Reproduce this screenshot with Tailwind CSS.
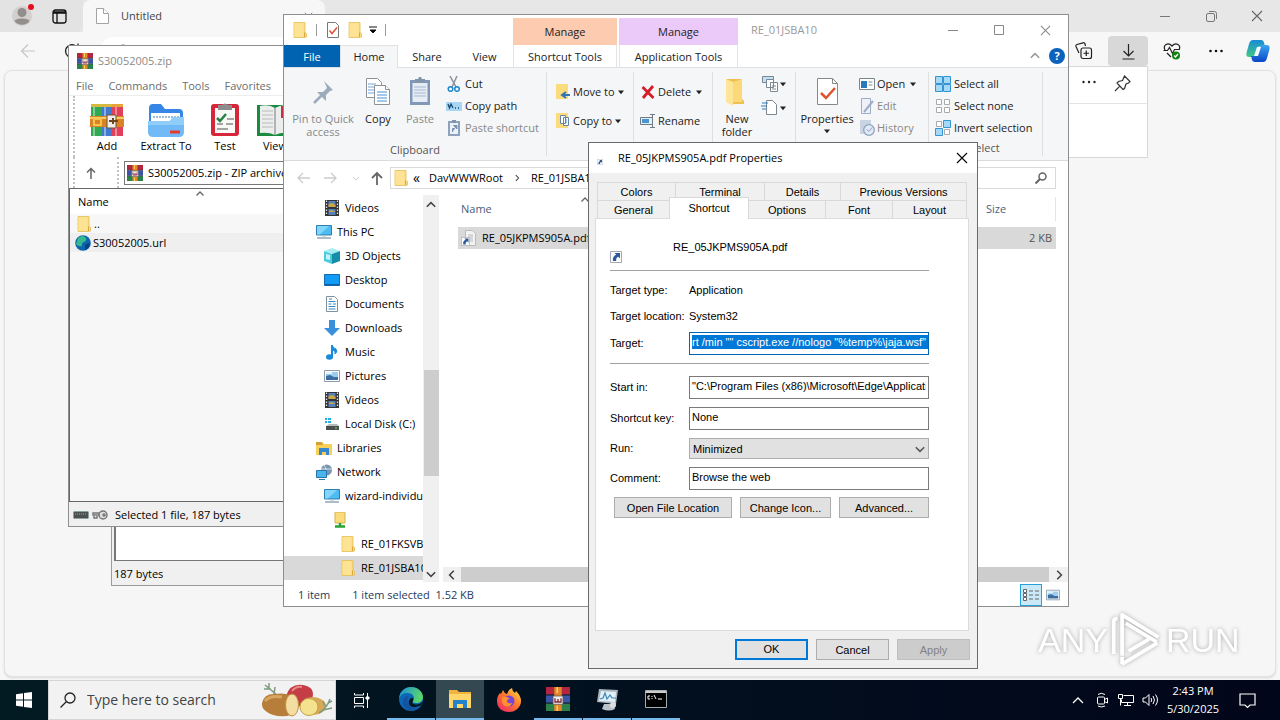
<!DOCTYPE html>
<html lang="en">

<head>
    <meta charset="utf-8" />
    <meta name="viewport" content="width=device-width, initial-scale=1.0" />
    <title>RE_01JSBA10</title>
    <script src="https://cdn.jsdelivr.net/npm/@tailwindcss/browser@4"></script>
</head>

<body class="h-screen overflow-hidden flex flex-col bg-[#e7e7e7] text-[11px] leading-4 text-black font-['Open_Sans',sans-serif]">
    <!-- Shared icons -->
    <svg class="hidden" xmlns="http://www.w3.org/2000/svg">
        <symbol id="folder" viewBox="0 0 16 16"><path d="M2 .5h11v10l1.500 1V15l-1 .5H2z" fill="#fbdc7c" stroke="#e6bd55" stroke-width=".8" /><path d="M2.500 1h9v14h-9z" fill="#ffe394" /><path d="M12.500 10.500v4.500" stroke="#dba93b" /></symbol>
        <symbol id="rar" viewBox="0 0 16 16"><path fill="#b3263f" d="M0 0h16v5H0z" /><path fill="#3a55a8" d="M0 5.500h16v5H0z" /><path fill="#2b8149" d="M0 11h16v5H0z" /><path stroke="#222c48" stroke-width=".7" d="M0 5.300h16M0 10.700h16" /><path fill="#e1862a" d="M5.500 0h5v16h-5z" /><path fill="#eee" stroke="#555" stroke-width=".5" d="M4.700 6h6.600v5.500H4.700z" /><path fill="none" stroke="#8a2533" stroke-width=".9" d="M6 7.500v2.500h4V7.500M8 8V10" /><path stroke="#ffd25c" d="M7.500 0v4M7.500 12.500V16" /></symbol>
        <symbol id="video" viewBox="0 0 16 16"><path fill="#323436" d="M1 0h14v16H1z" /><path stroke="#ddd" stroke-dasharray="1.500 1.500" stroke-width="1.300" d="M2.500 .5v15M13.500 .5v15" /><path fill="#5480bd" d="M4.500 1h7v6h-7zM4.500 9h7v6h-7z" /><path fill="#cda747" d="M4.500 4l4-1 3 2v2h-7zM5 11l3-1 3.500 2H5z" /></symbol>
        <symbol id="pc" viewBox="0 0 16 16"><path fill="#4dbcf3" stroke="#2f7fae" d="M.5 1.500h15v9.500H.5z" /><path fill="#82d6fb" d="M1 2h12L4 10.500H1z" /><path d="M1 14h14" stroke="#7f97a5" stroke-width="1.300" /><path d="M6 12h4" stroke="#b4c4cc" /></symbol>
        <symbol id="picture" viewBox="0 0 16 16"><path fill="#fff" stroke="#8c9aab" d="M.5 2.500h15v11H.5z" /><path fill="#9bcdf1" d="M2 4h12v5H2z" /><path fill="#3c6da0" d="M2 8l4-1 4 2 4 0v3H2z" /><path fill="#e8f4fb" d="M2 4h6v2H2z" /></symbol>
        <symbol id="lnk" viewBox="0 0 12 12"><path fill="#fff" stroke="#a2a9b4" d="M.5.500h11v11H.5z" /><path fill="#2d599b" d="M4.500 2H10v5.500L8.200 5.800C6.600 6.500 6 8 6.200 10H3C2.400 7 3.500 5 6.200 3.800z" /></symbol>
        <symbol id="caret" viewBox="0 0 8 5"><path d="M1 .5h6L4 4.200z" fill="#222" /></symbol>
        <symbol id="up" viewBox="0 0 10 10"><path d="M1.500 6.500L5 3l3.500 3.500" fill="none" stroke="currentColor" stroke-width="1.300" /></symbol>
        <symbol id="close" viewBox="0 0 12 12"><path d="M1 1l10 10M11 1L1 11" fill="none" stroke="currentColor" stroke-width="1.100" /></symbol>
    </svg>

    <main class="relative flex-1 min-h-0 overflow-hidden">

        <!-- Edge browser -->
        <section class="h-full flex flex-col bg-[#f7f7f7]">
            <header class="h-8 shrink-0 flex bg-[#e7e7e7]">
                <div class="w-[83px] shrink-0 flex items-center pl-3 gap-5 bg-[#e3e3e3] rounded-br-lg">
                    <button aria-label="Profile" class="relative">
                        <svg class="size-[20px]" viewBox="0 0 20 20"><circle cx="10" cy="10" r="10" fill="#d2cfcd" /><circle cx="10" cy="6.500" r="4.500" fill="#918e8c" /><path d="M2.500 15c1-3.500 14-3.500 15 0-3 5-12 5-15 0z" fill="#918e8c" /></svg>
                        <span class="absolute -top-0.5 -right-0.5 size-[6px] rounded-full bg-[#e30f1c]"></span>
                    </button>
                    <button aria-label="Tab actions"><svg class="size-[15px]" viewBox="0 0 15 15" fill="none" stroke="#111" stroke-width="1.300"><rect x="1" y="1" width="13" height="13" rx="2.500" /><path d="M5 4v10" /><path d="M1 3.500h13" stroke-width="2.500" /></svg></button>
                </div>
                <div class="w-[242px] shrink-0 flex items-center pl-[13px] pr-3 bg-[#f7f7f7] rounded-t-lg">
                    <svg class="w-[13px] h-4 mr-3" viewBox="0 0 13 16" fill="#fff" stroke="#a3a3a3"><path d="M.5.500h7l5 5v10H.5z" /><path d="M7.500.500v5h5" /></svg>
                    <span class="flex-1 text-[#444]">Untitled</span>
                    <svg class="size-[9px] text-[#777]"><use href="#close" /></svg>
                </div>
                <div class="flex-1 flex justify-end text-[#666]">
                    <button class="w-[46px] grid place-items-center" aria-label="Minimize"><svg class="size-[10px]" viewBox="0 0 10 10"><path d="M0 5.500h10" stroke="#777" /></svg></button>
                    <button class="w-[46px] grid place-items-center" aria-label="Restore"><svg class="size-[11px]" viewBox="0 0 11 11" fill="none" stroke="#777"><rect x=".5" y="2.500" width="8" height="8" rx="1.500" /><path d="M3 .5h5.500a2 2 0 012 2V8" /></svg></button>
                    <button class="w-[46px] grid place-items-center" aria-label="Close"><svg class="size-[12px]"><use href="#close" /></svg></button>
                </div>
            </header>
            <div class="h-[38px] shrink-0 flex items-center gap-1 pr-1">
                <button class="w-14 grid place-items-center" aria-label="Back"><svg class="size-[16px]" viewBox="0 0 16 16" fill="none" stroke="#c6c6c6" stroke-width="1.200"><path d="M15 8H1.500M8 1.500L1.500 8 8 14.500" /></svg></button>
                <button class="w-6 grid place-items-center" aria-label="Refresh"><svg class="size-[16px]" viewBox="0 0 16 16" fill="none" stroke="#222" stroke-width="1.300"><path d="M14.500 8A6.500 6.500 0 1112 3M14 .5V4.500h-4" /></svg></button>
                <div class="flex-1 h-7 ml-3 pl-4 flex items-center rounded-l-2xl bg-white"><svg class="size-[14px]" viewBox="0 0 14 14" fill="none" stroke="#777"><circle cx="7" cy="7" r="6" /></svg></div>
                <button class="w-10 h-[30px] grid place-items-center" aria-label="Collections"><svg class="size-[18px]" viewBox="0 0 18 18" fill="none" stroke="#222" stroke-width="1.200"><rect x="6" y="6" width="10.500" height="10.500" rx="2" /><path d="M11.250 8.500v5.500M8.500 11.250H14M4 11L1 4.500Q.5 3 2 2.500L8 .8Q9.800.400 10 2l.5 2" /></svg></button>
                <button class="w-10 h-[30px] grid place-items-center rounded-sm bg-[#d8d8d8]" aria-label="Downloads"><svg class="size-[17px]" viewBox="0 0 17 17" fill="none" stroke="#222" stroke-width="1.200"><path d="M8.500 1v11.500M3.500 8l5 5 5-5M2.500 16h12" /></svg></button>
                <button class="w-10 h-[30px] grid place-items-center" aria-label="Browser essentials"><svg class="size-[18px]" viewBox="0 0 18 18" fill="none" stroke="#222" stroke-width="1.200"><path d="M2 8C-.5 3 5-.5 9 4c4-4.500 9.500-1 7 4M4 11l4 4M.5 8.500h4l2-3 3 6 2-4h5" /><circle cx="13" cy="13.500" r="4" fill="#138212" stroke="none" /><path d="M11.200 13.500l1.300 1.500 2.500-3" stroke="#fff" /></svg></button>
                <button class="w-10 h-[30px] grid place-items-center" aria-label="Settings and more"><svg class="size-[14px]" viewBox="0 0 14 14" fill="#111"><circle cx="1.500" cy="7" r="1.300" /><circle cx="7" cy="7" r="1.300" /><circle cx="12.500" cy="7" r="1.300" /></svg></button>
                <button class="w-9 h-[30px] grid place-items-center" aria-label="Copilot">
                    <svg class="size-[24px]" viewBox="0 0 24 24"><defs><linearGradient id="cpa" x2="0" y2="1"><stop stop-color="#168ad8" /><stop offset="1" stop-color="#43ca84" /></linearGradient><linearGradient id="cpb" x2="0" y2="1"><stop stop-color="#3da4f2" /><stop offset="1" stop-color="#0b46c6" /></linearGradient></defs><path d="M7 1h8c3 0 3 3 4 6h-4c-3 0-3 2-4 6s-2 5-5 5H3c-3 0-3-3-2-6l2-7c1-3 2-4 4-4z" fill="url(#cpa)" /><path d="M17 6h4c3 0 3 3 2 6l-2 7c-1 3-2 4-4 4H9c-3 0-3-3-4-6h4c3 0 3-2 4-6s1-5 4-5z" fill="url(#cpb)" /><path d="M11 8h4l-3 9H8z" fill="#f4fbff" /></svg>
                </button>
            </div>
            <div class="flex-1 mx-1 mb-[3px] rounded-lg border border-[#e3e3e3] bg-[#f6f6f6] shadow-sm"></div>
        </section>

        <!-- Downloads flyout -->
        <section class="absolute right-[132px] top-[66px] w-[260px] h-[92px] border border-[#d8d8d8] bg-white">
            <div class="h-[37px] flex items-center justify-end gap-[18px] pr-4 pb-1 border-b border-[#e3e3e3]">
                <button aria-label="More options"><svg class="size-[14px]" viewBox="0 0 14 14" fill="#222"><circle cx="1.500" cy="6" r="1.200" /><circle cx="7" cy="6" r="1.200" /><circle cx="12.500" cy="6" r="1.200" /></svg></button>
                <button aria-label="Pin"><svg class="size-[17px]" viewBox="0 0 17 17" fill="none" stroke="#333" stroke-width="1.200"><path d="M10.500 1l5.500 5.500-1.500 1.500-2.500 1-1.500 4.500L9 14.500 3 8l1.500-1.500 4-1zM5.800 11.200L1 16" /></svg></button>
            </div>
        </section>

        <!-- Archive window at the back -->
        <section class="absolute left-[111px] top-[480px] w-[400px] h-[106px] flex flex-col border border-[#9a9a9a] bg-[#f0f0f0]">
            <div class="flex-1 ml-0.5 bg-white border-l-2 border-b border-[#777]"></div>
            <footer class="h-6 flex items-center pl-0.5 pt-0.5">187 bytes</footer>
        </section>

        <!-- WinRAR -->
        <section class="absolute left-[68px] top-[45px] w-[480px] h-[482px] flex flex-col border border-[#8e8e8e] bg-white">
            <header class="h-[30px] flex items-center gap-[5px] pl-2 text-[#8b8b8b]"><svg class="size-4"><use href="#rar" /></svg><span>S30052005.zip</span></header>
            <nav class="h-5 flex items-center gap-[15px] pl-[7px] text-[#6d6d6d] border-b border-[#eee]">
                <a href="#">File</a><a href="#">Commands</a><a href="#">Tools</a><a href="#">Favorites</a>
            </nav>
            <div class="h-[61px] flex pl-1">
                <span class="border-l-2 border-dotted border-[#c0c0c0]"></span>
                <button class="w-16 flex flex-col items-center pt-1.5">
                    <svg class="size-[36px]" viewBox="0 0 36 36"><path fill="#32a852" d="M2 2h11v32H2z" /><path fill="#4079ce" d="M13 2h10v32H13z" /><path fill="#e23f5b" d="M23 2h11v32H23z" /><path fill="#d6b93e" d="M2 2h11v3H2zM13 2h10v3H13z" /><path fill="#e8a43a" d="M23 2h11v3H23z" /><path d="M5 5v29M16 5v29M27 5v29" stroke="#fff" stroke-opacity=".4" stroke-width="2" /><path fill="#d88327" d="M1 14h34v11H1z" /><path stroke="#f7ca62" stroke-width="2" d="M1 16h34" /><path fill="none" stroke="#f7c34d" stroke-width="2" d="M5 17h7v6H5z" /><path fill="#eee" stroke="#735025" d="M18 13h9v13h-9z" /><path d="M20 19h9M24 16v6" stroke="#70451a" stroke-width="2" /></svg>
                    <span>Add</span>
                </button>
                <button class="w-[54px] flex flex-col items-center pt-1.5">
                    <svg class="size-[36px]" viewBox="0 0 36 36"><path fill="#3686e8" d="M1 6q0-4 4-4h8l4 5h14q4 0 4 4v8H1z" /><path fill="#fff" d="M3 11h29v12H3z" /><path d="M5 15h26" stroke="#9bbbd7" stroke-width="2" stroke-dasharray="2 1" /><path fill="#72baf7" d="M0 19h22l3-4h11v15q0 5-5 5H5q-5 0-5-5z" /><path fill="#91cdf9" d="M0 19h22l3-4h11v8H0z" /><path d="M22 30h10" stroke="#e33d2c" stroke-width="3" /></svg>
                    <span class="whitespace-nowrap">Extract To</span>
                </button>
                <button class="w-16 flex flex-col items-center pt-1.5">
                    <svg class="size-[36px]" viewBox="0 0 36 36"><rect x="4" y="2" width="28" height="32" rx="3" fill="#d7263a" /><path fill="#f8f8f6" d="M8 6h20v25H8z" /><path fill="#8c8c8c" d="M11 3h4q3-3 6 0h4v5H11z" /><path d="M10 16l3 3 6-7" fill="none" stroke="#238344" stroke-width="2.500" /><path d="M20 17h7M19 22h7M10 22h6M10 27h11" stroke="#888" stroke-width="1.500" /></svg>
                    <span>Test</span>
                </button>
                <button class="w-9 flex flex-col items-center pt-1.5">
                    <svg class="size-[36px]" viewBox="0 0 36 36"><path fill="#198b3f" d="M0 3h36v31H0z" /><path fill="#eceeed" d="M3 4q9-2 15 2 7-4 15-2v27q-9-1-15 2-6-3-15-2z" /><path d="M5 9h11M5 13h11M5 17h11M5 21h11M5 25h11" stroke="#b8b8b8" /><path d="M18 6v27" stroke="#777" /><path d="M26 4v12" stroke="#c13245" stroke-width="4" /></svg>
                    <span>View</span>
                </button>
            </div>
            <div class="h-[31px] flex items-center pl-1">
                <span class="self-stretch w-3 border-l-2 border-dotted border-[#c0c0c0]"></span>
                <button aria-label="Up one level" class="w-8"><svg class="size-[12px]" viewBox="0 0 12 12" fill="none" stroke="#666" stroke-width="1.500"><path d="M6 12V1.500M2 5.500l4-4 4 4" /></svg></button>
                <span class="self-stretch w-[7px] border-l-2 border-dotted border-[#c0c0c0]"></span>
                <div class="flex-1 h-[24px] mr-4 flex items-center gap-[5px] pl-0.5 border border-[#777]"><svg class="size-4"><use href="#rar" /></svg><span>S30052005.zip - ZIP archive</span></div>
            </div>
            <div class="flex-1 border-l border-y border-[#666] bg-[#f7f7f7]">
                <table class="w-full">
                    <thead><tr class="h-[25px] bg-white"><th class="pl-2 text-left font-normal relative">Name<svg class="absolute left-[125px] top-0 size-[10px] text-[#666]"><use href="#up" /></svg></th></tr></thead>
                    <tbody>
                        <tr class="h-[19px]"><td><div class="flex items-center gap-0.5 pl-1.5"><svg class="size-4"><use href="#folder" /></svg>..</div></td></tr>
                        <tr class="h-[19px] bg-[#efefef]"><td><div class="flex items-center gap-0.5 pl-[5px]"><svg class="size-4" viewBox="0 0 16 16"><circle cx="8" cy="8" r="7.800" fill="#0c66ad" /><path d="M3 3q5-4 8 0 1 3-2 4t-2 4q-4 1-6-2z" fill="#36b98e" /><path d="M10 10q4-3 5-1-1 5-5 6z" fill="#083f88" /></svg>S30052005.url</div></td></tr>
                    </tbody>
                </table>
            </div>
            <footer class="h-6 shrink-0 flex items-center gap-[3px] pl-1 pt-0.5 bg-[#f0f0f0]">
                <svg class="w-4 h-2" viewBox="0 0 16 8"><rect x=".5" y=".5" width="15" height="7" rx="1" fill="#4b5150" stroke="#8ba19d" /><path d="M2 3h12" stroke="#9aa" stroke-dasharray="1 1" /></svg>
                <svg class="w-4 h-[10px]" viewBox="0 0 16 10" fill="none" stroke="#777" stroke-width="1.500"><path d="M8 3H1v2h7M2 6v2h3V6" /><circle cx="11" cy="5" r="4" fill="#ddd" /><circle cx="12" cy="5" r="1" /></svg>
                <span class="ml-1">Selected 1 file, 187 bytes</span>
            </footer>
        </section>

        <!-- File Explorer -->
        <section class="absolute left-[283px] top-[14px] w-[786px] h-[593px] flex flex-col border border-[#8e8e8e] bg-white text-[#222]">
            <header class="h-[30px] shrink-0 flex">
                <div class="w-[229px] shrink-0 flex items-center pl-2">
                    <svg class="size-4"><use href="#folder" /></svg>
                    <span class="w-px h-3 mx-2 bg-[#999]"></span>
                    <button aria-label="Properties" class="mr-1.5"><svg class="size-4" viewBox="0 0 16 16" fill="none" stroke="#777"><path d="M2.500.500h8l3 3v12h-11z" fill="#fff" /><path d="M4.500 8.500l2.500 3 5-6" stroke="#e0532f" stroke-width="1.500" /></svg></button>
                    <button aria-label="New folder"><svg class="size-4"><use href="#folder" /></svg></button>
                    <button aria-label="Customize" class="ml-1.5"><svg class="w-2 h-2" viewBox="0 0 8 8"><path d="M0 1h8M1 4h6L4 7z" stroke="#111" /></svg></button>
                    <span class="w-px h-3 ml-2 bg-[#999]"></span>
                </div>
                <div class="w-[104px] mt-[3px] mr-0.5 grid place-items-center bg-[#fccbb0]">Manage</div>
                <div class="w-[119px] mt-[3px] grid place-items-center bg-[#ebc9f9]">Manage</div>
                <h1 class="flex-1 pl-[13px] self-center text-[#999]">RE_01JSBA10</h1>
                <button class="w-[46px] grid place-items-center" aria-label="Minimize"><svg class="size-[10px]" viewBox="0 0 10 10"><path d="M0 5.500h10" stroke="#888" /></svg></button>
                <button class="w-[46px] grid place-items-center" aria-label="Maximize"><svg class="size-[10px]" viewBox="0 0 10 10"><path d="M.5.500h9v9h-9z" fill="none" stroke="#888" /></svg></button>
                <button class="w-[46px] grid place-items-center text-[#888]" aria-label="Close"><svg class="size-[11px]"><use href="#close" /></svg></button>
            </header>
            <nav class="h-[23px] shrink-0 flex items-stretch text-center border-b border-[#dfe1e3]">
                <button class="w-14 bg-[#0063b1] pt-px text-white">File</button>
                <button class="w-[58px] -mb-px bg-[#f5f6f7] border-x border-t border-[#e0e2e4]">Home</button>
                <button class="w-[58px] pt-px">Share</button>
                <button class="w-[57px] pt-px">View</button>
                <button class="w-[104px] mr-0.5 pt-px border-x border-[#e4e4e4]">Shortcut Tools</button>
                <button class="w-[119px] pt-px border-x border-[#e4e4e4]">Application Tools</button>
                <div class="flex-1 flex items-center justify-end gap-2 pr-[3px] text-[#999]">
                    <button aria-label="Collapse ribbon"><svg class="size-[12px]"><use href="#up" /></svg></button>
                    <button aria-label="Help" class="size-4 rounded-full bg-[#0b61bd] text-white font-bold">?</button>
                </div>
            </nav>
            <div class="h-[93px] shrink-0 flex bg-[#f5f6f7] border-b border-[#dadbdc]">
                <div class="w-[262px] flex flex-col">
                    <div class="flex-1 flex">
                        <button class="w-[78px] flex flex-col items-center pt-2 leading-[13px] text-[#888]">
                            <svg class="size-8 mb-1" viewBox="0 0 32 32"><path d="M18 6l9 9-3 1-4 4 0 6-9-9 6 0 4-4z" fill="#9cacbd" transform="translate(-1 -1)" /><path d="M15 19l-8 8" stroke="#9cacbd" stroke-width="2.500" /></svg>
                            Pin to Quick access
                        </button>
                        <button class="w-8 flex flex-col items-center pt-2 leading-[13px]">
                            <svg class="size-8 mb-1" viewBox="0 0 32 32" fill="#fff" stroke="#8d9298"><path d="M4.500 2.500h11l4 4v15h-15z" /><path d="M6 8h8M6 11h8M6 14h6M6 17h6" stroke="#70a5dc" /><path d="M12.500 9.500h11l4 4v15h-15z" /><path d="M23.500 9.500v4h4" /><path d="M15 16h10M15 19h10M15 22h10M15 25h10" stroke="#4790dc" /></svg>
                            Copy
                        </button>
                        <button class="w-[52px] flex flex-col items-center pt-2 leading-[13px] text-[#888]">
                            <svg class="size-8 mb-1" viewBox="0 0 32 32"><path d="M6 4h20v25H6z" fill="#8197b5" /><path d="M8.500 7h15v19h-15z" fill="#e6ecf4" /><path d="M11 3h3l1-2h2l1 2h3v4H11z" fill="#8294ab" /><path d="M10 11h12M10 14h12M10 17h12M10 20h12" stroke="#a2b8d3" /></svg>
                            Paste
                        </button>
                        <div class="flex flex-col pt-[5px] text-left">
                            <button class="h-[22px] flex items-center gap-[3px]"><svg class="size-4" viewBox="0 0 16 16" fill="none"><path d="M4 0l6 11M11 0L6 11" stroke="#8b929b" stroke-width="1.500" /><circle cx="4.500" cy="13" r="2.300" stroke="#1c86cc" stroke-width="1.500" /><circle cx="11" cy="13" r="2.300" stroke="#1c86cc" stroke-width="1.500" /></svg>Cut</button>
                            <button class="h-[22px] flex items-center gap-[3px]"><svg class="size-4" viewBox="0 0 16 16"><path d="M0 4h16v9H0z" fill="#a9d6f5" /><path d="M2 6l1.500 4L5 6l2 4M9 10h1M12 10h1" fill="none" stroke="#17476f" stroke-width="1.300" /></svg>Copy path</button>
                            <button class="h-[22px] flex items-center gap-[3px] text-[#888]"><svg class="size-4" viewBox="0 0 16 16"><path d="M2 1h12v15H2z" fill="#8fa2bb" /><path d="M4 3h8v11H4z" fill="#edf2f8" /><path d="M6 0h4v3H6z" fill="#8294ab" /><path d="M6.500 12V8.500H9M7.500 5.500H11V9z" fill="#7992b5" stroke="#7992b5" /></svg>Paste shortcut</button>
                        </div>
                    </div>
                    <span class="h-[18px] text-center text-[#555]">Clipboard</span>
                </div>
                <div class="w-[87px] my-1 flex flex-col border-l border-[#dedfe0] pt-[9px] pl-2 gap-[7px]">
                    <button class="h-[22px] flex items-center gap-0.5 whitespace-nowrap"><svg class="size-4" viewBox="0 0 16 16"><path d="M1 0h12v15H1z" fill="#fbdc7c" /><path d="M15 11H8M11 8l-4 3 4 3" fill="none" stroke="#3175b8" stroke-width="2" /></svg>Move to<svg class="w-2 h-[5px]"><use href="#caret" /></svg></button>
                    <button class="h-[22px] flex items-center gap-0.5 whitespace-nowrap"><svg class="size-4" viewBox="0 0 16 16"><path d="M1 0h12v15H1z" fill="#fbdc7c" /><path d="M5.500 2.500h5v8h-5zM8.500 4.500h5v8h-5z" fill="#fff" stroke="#6784a4" /><path d="M10 7h2M10 9h2" stroke="#4790dc" /></svg>Copy to<svg class="w-2 h-[5px]"><use href="#caret" /></svg></button>
                </div>
                <div class="w-[79px] my-1 flex flex-col border-l border-[#dedfe0] pt-[9px] pl-1.5 gap-[7px]">
                    <button class="h-[22px] flex items-center gap-0.5 whitespace-nowrap"><svg class="size-4" viewBox="0 0 16 16"><path d="M2.500 3l11 11M13 2L3 14" stroke="#d61c2b" stroke-width="2.800" /></svg>Delete<svg class="w-2 h-[5px] ml-0.5"><use href="#caret" /></svg></button>
                    <button class="h-[22px] flex items-center gap-0.5 whitespace-nowrap"><svg class="size-4" viewBox="0 0 16 16" fill="none" stroke="#717b85"><path d="M.5 4.500h12v7H.5z" fill="#dff0fb" /><path d="M2 6h7v4H2z" fill="#4b93d2" stroke="none" /><path d="M10 1.500h5M10 14.500h5M12.500 1.500v13" /></svg>Rename</button>
                </div>
                <div class="w-[83px] my-1 flex border-l border-[#dedfe0]">
                    <button class="w-12 flex flex-col items-center pt-1 leading-[13px]">
                        <svg class="size-8 mb-1" viewBox="0 0 32 32"><path d="M5 3h16v20l2 2v3H9z" fill="#efbf4f" /><path d="M5 3l7 3v24l-7-4z" fill="#ffe597" /><path d="M12 6l9-3v23h-9z" fill="#fbd979" /></svg>
                        New folder
                    </button>
                    <div class="flex flex-col gap-1 pt-0.5">
                        <button aria-label="New item" class="flex items-center"><svg class="w-[18px] h-5" viewBox="0 0 18 20" fill="#fff" stroke="#7c8790"><path d="M1.500 2.500h11v6h-11z" fill="#bfe1f4" /><path d="M5.500 5.500h7v8h-7zM9.500 8.500h7v9h-7z" /><path d="M11 12h4M11 15h4" /></svg><svg class="w-2 h-[5px]"><use href="#caret" /></svg></button>
                        <button aria-label="Easy access" class="flex items-center"><svg class="w-[18px] h-5" viewBox="0 0 18 20" fill="#fff" stroke="#7c8790"><path d="M5.500 2.500h6l4 4v10h-10z" /><path d="M1 5h6M0 8h6M1 11h4" stroke="#2d7cc2" /></svg><svg class="w-2 h-[5px]"><use href="#caret" /></svg></button>
                    </div>
                </div>
                <div class="w-[133px] my-1 flex border-l border-[#dedfe0] pl-0.5">
                    <button class="w-[58px] shrink-0 flex flex-col items-center pt-1 leading-[13px]">
                        <svg class="size-8 mb-1" viewBox="0 0 32 32" fill="none" stroke="#888"><path d="M6.500 2.500h15l5 5v21h-20z" fill="#fff" /><path d="M21.500 2.500v5h5" /><path d="M10 17l5 5 9-10" stroke="#e0532f" stroke-width="2.500" /></svg>
                        Properties
                        <svg class="w-2 h-[5px] mt-1"><use href="#caret" /></svg>
                    </button>
                    <div class="flex flex-col pt-px pl-[3px]">
                        <button class="h-[22px] flex items-center gap-0.5"><svg class="size-4" viewBox="0 0 16 16"><path d="M.5 2.500h15v11H.5z" fill="#fff" stroke="#788" /><path d="M2 5h6v7H2z" fill="#2a79bf" /><path d="M9.500 6h4M9.500 9h4" stroke="#888" /></svg>Open<svg class="w-2 h-[5px] ml-0.5"><use href="#caret" /></svg></button>
                        <button class="h-[22px] flex items-center gap-0.5 text-[#888]"><svg class="size-4" viewBox="0 0 16 16" fill="#eef2f8" stroke="#9cadc7"><path d="M2.500.500h9v15h-9z" /><path d="M5 14L14 3" stroke-width="2" /></svg>Edit</button>
                        <button class="h-[22px] flex items-center gap-0.5 text-[#888]"><svg class="size-4" viewBox="0 0 16 16" fill="#e3eaf4" stroke="#8ea3c2"><path d="M1 0h11v14H1z" stroke="none" fill="#c9d4e2" /><circle cx="10" cy="10" r="5.300" stroke-width="1.300" /><path d="M7.500 9.500l2.500 2 3-4" fill="none" /></svg>History</button>
                    </div>
                </div>
                <div class="w-[115px] my-1 pt-px flex flex-col border-x border-[#dedfe0] pl-1.5">
                    <button class="h-[22px] flex items-center gap-[3px] whitespace-nowrap"><svg class="size-4" viewBox="0 0 16 16" fill="#a6d9f8" stroke="#3595d2"><path d="M.5.500h7v7h-7zM8.500.500h7v7h-7zM.5 8.500h7v7h-7zM8.500 8.500h7v7h-7z" /></svg>Select all</button>
                    <button class="h-[22px] flex items-center gap-[3px] whitespace-nowrap"><svg class="size-4" viewBox="0 0 16 16" fill="#fff" stroke="#aaa"><path d="M1.500 1.500h5v5h-5zM9.500 1.500h5v5h-5zM1.500 9.500h5v5h-5zM9.500 9.500h5v5h-5z" /></svg>Select none</button>
                    <button class="h-[22px] flex items-center gap-[3px] whitespace-nowrap"><svg class="size-4" viewBox="0 0 16 16" fill="#fff" stroke="#aaa"><path d="M1.500 1.500h5v5h-5zM9.500 9.500h5v5h-5z" /><path d="M8.500.500h7v7h-7zM.5 8.500h7v7h-7z" fill="#a6d9f8" stroke="#3595d2" /></svg>Invert selection</button>
                    <span class="mt-auto pr-2 text-center text-[#555]">Select</span>
                </div>
            </div>
            <div class="h-[34px] shrink-0 flex items-center pl-3 pr-3">
                <button aria-label="Back" class="w-7"><svg class="size-[14px]" viewBox="0 0 14 14" fill="none" stroke="#ccc" stroke-width="1.300"><path d="M14 7H2M7 2L2 7l5 5" /></svg></button>
                <button aria-label="Forward" class="w-7"><svg class="size-[14px]" viewBox="0 0 14 14" fill="none" stroke="#ccc" stroke-width="1.300"><path d="M0 7h12M7 2l5 5-5 5" /></svg></button>
                <button aria-label="Recent" class="w-[18px]"><svg class="w-2 h-[5px]" viewBox="0 0 8 5"><path d="M1 1l3 3 3-3" fill="none" stroke="#ccc" /></svg></button>
                <button aria-label="Up" class="w-5"><svg class="size-[14px]" viewBox="0 0 14 14" fill="none" stroke="#666" stroke-width="1.800"><path d="M7 14V2M2 7l5-5 5 5" /></svg></button>
                <div class="w-[480px] h-[22px] flex items-center border border-[#d9d9d9] pl-0.5 text-black">
                    <svg class="size-4 mr-1"><use href="#folder" /></svg><span class="w-4 text-sm leading-4">«</span><a href="#">DavWWWRoot</a><svg class="size-[8px] mx-[10px] rotate-90 text-[#444]"><use href="#up" /></svg><a href="#">RE_01JSBA10</a>
                </div>
                <label class="flex-1 h-[22px] ml-3 flex items-center border border-[#d9d9d9] pr-2">
                    <input type="search" aria-label="Search" class="flex-1 min-w-0 outline-none" />
                    <svg class="size-[12px]" viewBox="0 0 12 12" fill="none" stroke="#666" stroke-width="1.500"><circle cx="7.500" cy="4.500" r="3.500" /><path d="M5 7l-4.500 4.500" stroke-width="2" /></svg>
                </label>
            </div>
            <div class="flex-1 min-h-0 flex text-black">
                <nav class="w-[139px] shrink-0 pt-px overflow-hidden whitespace-nowrap">
                    <a href="#" class="h-6 flex items-center gap-[5px] pl-10"><svg class="size-4 shrink-0"><use href="#video" /></svg>Videos</a>
                    <a href="#" class="h-6 flex items-center gap-[5px] pl-8"><svg class="size-4 shrink-0"><use href="#pc" /></svg>This PC</a>
                    <a href="#" class="h-6 flex items-center gap-[5px] pl-10"><svg class="size-4 shrink-0" viewBox="0 0 16 16"><path d="M0 3l8-3 8 3-8 3z" fill="#a7edf4" /><path d="M0 3l8 3v10l-8-3z" fill="#4ecbda" /><path d="M16 3L8 6v10l8-3z" fill="#168ea9" /><path d="M2 6l4 1v5l-4-1z" fill="#c3f5f7" /></svg>3D Objects</a>
                    <a href="#" class="h-6 flex items-center gap-[5px] pl-10"><svg class="size-4 shrink-0" viewBox="0 0 16 16"><path d="M.5 2.500h15v11H.5z" fill="#129bf4" stroke="#1269ab" /><path d="M1 12.500h14" stroke="#0b5fa5" /></svg>Desktop</a>
                    <a href="#" class="h-6 flex items-center gap-[5px] pl-10"><svg class="size-4 shrink-0" viewBox="0 0 16 16"><path d="M2.500.500h8l3 3v12h-11z" fill="#fff" stroke="#819199" /><path d="M4.500 5.500h7M4.500 8h3M9 8h3M4.500 10.500h7M4.500 13h7M5 3h3" stroke="#3689c0" /></svg>Documents</a>
                    <a href="#" class="h-6 flex items-center gap-[5px] pl-10"><svg class="size-4 shrink-0" viewBox="0 0 16 16"><path d="M5 0h6v8h5l-8 8-8-8h5z" fill="#3991de" /></svg>Downloads</a>
                    <a href="#" class="h-6 flex items-center gap-[5px] pl-10"><svg class="size-4 shrink-0" viewBox="0 0 16 16"><path d="M8 1q1 3 4 4 2 3-1 5 1-3-2-4" fill="#168bdc" stroke="#168bdc" /><path d="M8 1v12" stroke="#168bdc" stroke-width="2" /><ellipse cx="5.500" cy="13" rx="3.500" ry="2.700" fill="#168bdc" /></svg>Music</a>
                    <a href="#" class="h-6 flex items-center gap-[5px] pl-10"><svg class="size-4 shrink-0"><use href="#picture" /></svg>Pictures</a>
                    <a href="#" class="h-6 flex items-center gap-[5px] pl-10"><svg class="size-4 shrink-0"><use href="#video" /></svg>Videos</a>
                    <a href="#" class="h-6 flex items-center gap-[5px] pl-10"><svg class="size-4 shrink-0" viewBox="0 0 16 16"><path d="M1 2h2v2H1zM4 2h3v2H4zM1 5h2v2H1zM4 5h3v2H4z" fill="#1eafe5" /><path d="M2 10l3-2h8l2 2z" fill="#b9bbbb" /><path d="M2 10h13v4H2z" fill="#4b4f50" /><path d="M11 12h2" stroke="#74dd79" /></svg>Local Disk (C:)</a>
                    <a href="#" class="h-6 flex items-center gap-[5px] pl-8"><svg class="size-4 shrink-0" viewBox="0 0 16 16"><path d="M0 2h6l2 2h8v11H0z" fill="#f8cf59" /><path d="M0 2h6l1 3H0z" fill="#d3a231" /><path d="M3 8h10v7h-3v-3H6v3H3z" fill="#3587cf" /></svg>Libraries</a>
                    <a href="#" class="h-6 flex items-center gap-[5px] pl-8"><svg class="size-4 shrink-0" viewBox="0 0 16 16"><circle cx="10.500" cy="6" r="5.500" fill="#7795ad" /><path d="M8 1q4 5 0 10M5 5h11" stroke="#d5e4ee" fill="none" /><path d="M.5 6.500h10v7H.5z" fill="#49b5ef" stroke="#2675a6" /><path d="M3 15.500h6" stroke="#2675a6" /></svg>Network</a>
                    <a href="#" class="h-6 flex items-center gap-[5px] pl-10"><svg class="size-4 shrink-0"><use href="#pc" /></svg>wizard-individual</a>
                    <a href="#" aria-label="Network share" class="h-6 flex items-center pl-12"><svg class="size-4 shrink-0" viewBox="0 0 16 16"><path d="M3 0h10v11H3z" fill="#fbdc7c" stroke="#d5b252" /><path d="M8 11v4M3 14.500h10" stroke="#2aa235" stroke-width="2.500" /></svg></a>
                    <a href="#" class="h-6 flex items-center gap-[5px] pl-14"><svg class="size-4 shrink-0"><use href="#folder" /></svg>RE_01FKSVB</a>
                    <a href="#" class="h-6 flex items-center gap-[5px] pl-14 bg-[#d9d9d9]"><svg class="size-4 shrink-0"><use href="#folder" /></svg>RE_01JSBA10</a>
                </nav>
                <div class="w-4 shrink-0 flex flex-col items-center bg-[#f0f0f0] text-[#444]">
                    <svg class="size-[12px] mt-1"><use href="#up" /></svg>
                    <span class="mt-[159px] w-[15px] h-[106px] bg-[#cdcdcd]"></span>
                    <svg class="size-[12px] mt-auto mb-0.5 rotate-180"><use href="#up" /></svg>
                </div>
                <div class="flex-1 ml-1 flex flex-col">
                    <table class="w-[598px] ml-[15px]">
                        <thead><tr class="h-7 text-left text-[#4c607a]">
                            <th class="relative pl-[3px] font-normal">Name<svg class="absolute left-[122px] top-0 size-[10px] text-[#666]"><use href="#up" /></svg></th>
                            <th class="w-[78px] pl-2 font-normal"><div class="border-r border-[#e5e5e5] leading-6">Size</div></th>
                        </tr></thead>
                        <tbody>
                            <tr><td class="h-1 p-0"></td></tr>
                            <tr class="h-[22px] bg-[#d9d9d9]">
                                <td><div class="flex items-center gap-[5px] pl-[3px]">
                                    <svg class="size-4" viewBox="0 0 16 16"><path d="M4.500.500h7l3 3v12h-10z" fill="#f3f3f3" stroke="#bbb" /><path d="M7 5h5M7 7h5M8 9h4M8 11h4" stroke="#bbb" /><use href="#lnk" x="0" y="7" width="9" height="9" /></svg>RE_05JKPMS905A.pdf</div></td>
                                <td class="pr-1 text-right text-[#555]">2 KB</td>
                            </tr>
                        </tbody>
                    </table>
                    <div class="mt-auto h-[15px] flex items-center bg-[#f0f0f0] text-[#444]">
                        <svg class="size-[12px] ml-[3px] mr-[3px] -rotate-90"><use href="#up" /></svg>
                        <span class="flex-1 h-full bg-[#cdcdcd]"></span>
                        <svg class="size-[12px] ml-1 mr-[3px] rotate-90"><use href="#up" /></svg>
                    </div>
                </div>
            </div>
            <footer class="h-6 shrink-0 flex items-center gap-[22px] pl-[14px] pr-2 pt-px text-[#1e395b]">
                <span>1 item</span>
                <span class="flex-1 whitespace-pre">1 item selected  1.52 KB</span>
                <div class="flex items-center gap-1">
                    <button aria-label="Details view" class="w-[22px] h-[22px] grid place-items-center border border-[#26a0da] bg-[#cbe8f6]"><svg class="size-4" viewBox="0 0 16 16" fill="#fff" stroke="#666"><path d="M.5 2.500h3v3h-3zM.5 6.500h3v3h-3zM.5 10.500h3v3h-3zM6 4h4M12 4h4M6 8h4M12 8h4M6 12h4M12 12h4" /></svg></button>
                    <button aria-label="Thumbnail view"><svg class="size-[14px]"><use href="#picture" /></svg></button>
                </div>
            </footer>
        </section>

        <!-- Watermark -->
        <div class="absolute left-[1038px] top-[608px] flex items-center text-[34px] leading-[64px] font-['Liberation_Sans_Narrow','Liberation_Sans',sans-serif] text-white drop-shadow-[0_0_2px_#aaa]">
            <span>ANY</span>
            <svg class="w-[54px] h-[62px] mx-0.5" viewBox="0 0 58 62" fill="none" stroke="#fff" stroke-width="4" stroke-linejoin="round"><path d="M4 46V11q0-3 4-3" /><path d="M13 48V4l39 24" /><path d="M17 13l33 20M13 57l38-23M20 43l22-13" /><path d="M13 49v8" /></svg>
            <span>RUN</span>
        </div>

        <!-- Properties dialog -->
        <section role="dialog" aria-label="Properties" class="absolute left-[588px] top-[142px] w-[390px] h-[527px] flex flex-col border border-[#6a6a6a] bg-[#f0f0f0] text-black font-['Liberation_Sans',sans-serif]">
            <header class="h-[30px] shrink-0 flex items-center pl-2 pr-[9px] bg-white">
                <svg class="size-[6px] mt-2 mr-[15px]"><use href="#lnk" /></svg>
                <h2 class="flex-1 font-['Open_Sans',sans-serif]">RE_05JKPMS905A.pdf Properties</h2>
                <button aria-label="Close"><svg class="size-[12px]"><use href="#close" /></svg></button>
            </header>
            <div role="tablist" class="shrink-0 mt-[9px] ml-2 mr-[10px]">
                <div class="h-[18px] flex border-t border-l border-[#d9d9d9]">
                    <button role="tab" class="w-[78px] border-r border-[#d9d9d9]">Colors</button>
                    <button role="tab" class="w-[89px] border-r border-[#d9d9d9]">Terminal</button>
                    <button role="tab" class="w-[76px] border-r border-[#d9d9d9]">Details</button>
                    <button role="tab" class="flex-1 border-r border-[#d9d9d9]">Previous Versions</button>
                </div>
                <div class="h-[18px] flex border-t border-l border-[#d9d9d9]">
                    <button role="tab" class="w-[71px]">General</button>
                    <button role="tab" aria-selected="true" class="relative z-10 w-20 -mt-1 -mb-px pb-0.5 bg-white border-x border-t border-[#d9d9d9]">Shortcut</button>
                    <button role="tab" class="w-[77px] border-r border-[#d9d9d9]">Options</button>
                    <button role="tab" class="w-[67px] border-r border-[#d9d9d9]">Font</button>
                    <button role="tab" class="flex-1 border-r border-[#d9d9d9]">Layout</button>
                </div>
            </div>
            <form class="flex-1 ml-1.5 mr-2 pl-[14px] pr-[39px] bg-white border border-[#dcdcdc]" onsubmit="return false">
                <div class="h-[52px] flex items-end border-b border-[#a0a0a0] pb-[7px]">
                    <svg class="size-[12px] mr-[51px]"><use href="#lnk" /></svg>
                    <span class="pb-2">RE_05JKPMS905A.pdf</span>
                </div>
                <dl class="grid grid-cols-[79px_1fr] gap-y-2 pt-[10px] leading-[18px]">
                    <dt class="whitespace-nowrap">Target type:</dt><dd>Application</dd>
                    <dt class="whitespace-nowrap">Target location:</dt><dd>System32</dd>
                </dl>
                <div class="grid grid-cols-[79px_1fr] items-center pt-[7px] pb-2 border-b border-[#a0a0a0]">
                    <label for="target" class="pb-0.5">Target:</label>
                    <input id="target" type="text" value='rt /min "" cscript.exe //nologo "%temp%\jaja.wsf"' class="h-[23px] min-w-0 pl-0.5 pt-0.5 pb-[5px] border border-[#0067b8] bg-[#0078d7] bg-clip-content text-white outline-none" />
                </div>
                <div class="grid grid-cols-[79px_1fr] items-center gap-y-2 pt-3">
                    <label for="start" class="pb-0.5">Start in:</label>
                    <input id="start" type="text" value='"C:\Program Files (x86)\Microsoft\Edge\Application"' class="h-[23px] min-w-0 px-0.5 pb-1 border border-[#7a7a7a]" />
                    <label for="key" class="pb-0.5">Shortcut key:</label>
                    <input id="key" type="text" value="None" class="h-[23px] min-w-0 px-0.5 pb-1 border border-[#7a7a7a]" />
                    <label for="run" class="pb-0.5">Run:</label>
                    <div class="relative h-[21px]">
                        <select id="run" class="appearance-none w-full h-[21px] px-[3px] border border-[#adadad] bg-[#e1e1e1]"><option>Minimized</option></select>
                        <svg class="absolute right-[3px] top-[5px] size-[12px] rotate-180 text-[#555] pointer-events-none"><use href="#up" /></svg>
                    </div>
                    <label for="comment" class="pb-0.5">Comment:</label>
                    <input id="comment" type="text" value="Browse the web" class="h-[23px] min-w-0 px-0.5 pb-1 border border-[#7a7a7a]" />
                </div>
                <div class="flex gap-2 pt-[7px] pl-1">
                    <button class="w-[118px] h-[21px] border border-[#adadad] bg-[#e1e1e1]">Open File Location</button>
                    <button class="w-[91px] h-[21px] border border-[#adadad] bg-[#e1e1e1]">Change Icon...</button>
                    <button class="flex-1 h-[21px] border border-[#adadad] bg-[#e1e1e1]">Advanced...</button>
                </div>
            </form>
            <footer class="shrink-0 flex justify-end gap-2 py-2 pr-[7px]">
                <button class="w-[73px] h-[21px] border-2 border-[#0078d7] bg-[#e1e1e1] leading-[17px]">OK</button>
                <button class="w-[73px] h-[21px] border border-[#adadad] bg-[#e1e1e1]">Cancel</button>
                <button disabled class="w-[73px] h-[21px] border border-[#bfbfbf] bg-[#ccc] text-[#838383]">Apply</button>
            </footer>
        </section>
    </main>

    <!-- Taskbar -->
    <footer class="relative h-10 shrink-0 flex bg-linear-to-r from-[#021a22] to-[#02061a] text-white">
        <button class="w-12 grid place-items-center" aria-label="Start"><svg class="size-4" viewBox="0 0 16 16" fill="#fff"><path d="M0 2.200L7 1.200V7.500H0zM8 1l8-1v7.500H8zM0 8.500h7v6.300l-7-1zM8 8.500h8V16l-8-1.100z" /></svg></button>
        <label class="w-72 flex items-center gap-[11px] pl-[11px] pr-0.5 bg-[#f2f2f2] border border-[#d5d5d5] text-sm">
            <svg class="size-4 shrink-0" viewBox="0 0 16 16" fill="none" stroke="#222" stroke-width="1.300"><circle cx="10" cy="6" r="5" /><path d="M6.500 9.500L.5 15.500" /></svg>
            <input type="text" placeholder="Type here to search" class="flex-1 min-w-0 outline-none placeholder:text-[#444]" />
            <svg class="w-[72px] h-9 shrink-0" viewBox="0 0 72 36"><path d="M4 3l12 10M8 1v6M14 5l-1 7M3 7h7" stroke="#7f9a7d" stroke-width="1.500" fill="none" /><path d="M25 14q4-13 17-11 13 2 9 14-5 9-18 7z" fill="#c53e45" /><path d="M31 9q4-5 10-4" stroke="#e9898a" stroke-width="2" fill="none" /><path d="M1 21q2-10 14-9 14-2 19 6 4 14-8 16-14 1-20-4-6-4-5-9z" fill="#b77d3a" /><path d="M4 19q5-6 17-4" stroke="#d7a761" stroke-width="3" fill="none" /><ellipse cx="31" cy="23" rx="6.500" ry="11" fill="#f3dda0" stroke="#c28e47" /><ellipse cx="52" cy="24" rx="13" ry="9" fill="#d7a957" /><ellipse cx="48" cy="25" rx="9" ry="8.500" fill="#f4e28f" stroke="#c7a047" /><path d="M58 31q8-5 11-14M62 28l9-2M64 24l-2-5M67 21l4-2" stroke="#7f9a7d" stroke-width="1.500" fill="none" /></svg>
        </label>
        <nav class="flex gap-px">
            <button class="w-[50px] grid place-items-center" aria-label="Task view"><svg class="size-[17px]" viewBox="0 0 17 17" fill="none" stroke="#fff"><path d="M1.500 5.500h9v6h-9zM1.500 1v2h9V1M1.500 16v-2h9v2M14.500 1v15" /><path d="M13 5h3v2h-3z" fill="#fff" /></svg></button>
            <button class="w-12 grid place-items-center border-b-2 border-[#76b9ed]" aria-label="Edge"><svg class="size-6" viewBox="0 0 24 24"><defs><linearGradient id="ed" x2="1" y2=".3"><stop stop-color="#198edb" /><stop offset="1" stop-color="#58d66b" /></linearGradient></defs><circle cx="12" cy="12" r="12" fill="#0c67b7" /><path d="M.2 11C1 4 6 0 12 0c7 0 12 5 12 10 0 4-3 6-7 6-3 0-4-1-3-2 3-4-1-8-5-8-4-.5-7 1.500-8.800 5z" fill="url(#ed)" /><path d="M10 9q-4 6 2 11 5 3 10-1-5 6-12 4-7-3-6-9 1-5 6-5z" fill="#15539f" /><path d="M14 14q-2 3 3 3.500 4 0 7-3-1 3-3 4.500-9 3-11-2-1-4 2-6 3-1 2 3z" fill="#021a22" /></svg></button>
            <button class="w-12 grid place-items-center border-b-2 border-[#76b9ed] bg-[#334850]" aria-label="File Explorer"><svg class="size-6" viewBox="0 0 24 24"><path d="M1 3h8l2 2h12v16H1z" fill="#f2b33c" /><path d="M1 7h22v14H1z" fill="#ffd66b" /><path d="M5 13h14v8h-4v-4H9v4H5z" fill="#2384cd" /></svg></button>
            <button class="w-12 grid place-items-center" aria-label="Firefox"><svg class="size-6" viewBox="0 0 24 24"><defs><linearGradient id="ff" x1="1" x2=".2" y2="1"><stop stop-color="#ffe64b" /><stop offset=".5" stop-color="#ff7a2b" /><stop offset="1" stop-color="#ef2c64" /></linearGradient></defs><path d="M3 5l1 1 2-4q1 3 4 4 1-4 5-6 0 3 3 5l1-2q5 5 5 10c0 6-5 11-12 11S0 20 0 13q0-5 3-8z" fill="url(#ff)" /><circle cx="12" cy="13" r="5.500" fill="#7746d8" /><path d="M5 9q5-1 8 2-3 0-3 2 0 3 5 2-2 5-7 3-4-2-3-9z" fill="#ff912f" /></svg></button>
            <button class="w-12 grid place-items-center border-b-2 border-[#76b9ed]" aria-label="WinRAR"><svg class="size-6"><use href="#rar" /></svg></button>
            <button class="w-12 grid place-items-center border-b-2 border-[#76b9ed]" aria-label="Monitor"><svg class="size-6" viewBox="0 0 24 24"><path d="M4 2l19 1-2 14-19-2z" fill="#a9b4bc" /><path d="M6 4l15 1-1 10-16-1z" fill="#e2eff7" /><path d="M5 12l3-1 2-5 2 6 3-4 2 3h4" fill="none" stroke="#3c86b6" stroke-width="1.200" /><path d="M9 17h9l2 5q-6 3-13 0z" fill="#bac3c9" /><circle cx="18" cy="18" r="3" fill="#ddd" /></svg></button>
            <button class="w-12 grid place-items-center border-b-2 border-[#76b9ed]" aria-label="Command Prompt"><svg class="w-[22px] h-[18px]" viewBox="0 0 22 18"><path d="M.5.500h21v17H.5z" fill="#000" stroke="#a6acb0" /><path d="M1 2h20" stroke="#ccc" stroke-width="2" /><path d="M5 6H3v3h2M7 6v1M7 8v1M9 5l2 4M13 9h4" stroke="#fff" fill="none" /></svg></button>
        </nav>
        <div class="ml-auto flex items-center pr-[10px]">
            <button class="w-6 grid place-items-center" aria-label="Show hidden icons"><svg class="w-3 h-2" viewBox="0 0 12 8"><path d="M1 7l5-5 5 5" fill="none" stroke="#fff" stroke-width="1.300" /></svg></button>
            <button class="w-6 grid place-items-center" aria-label="Meet now"><svg class="size-4" viewBox="0 0 16 16" fill="none" stroke="#fff"><rect x="3.500" y="5" width="7" height="7" rx="1" /><path d="M10.500 7.500l3-1.500v5l-3-1.500M4 2.500q3-2.500 7 0M4 14q3 2 7 0" /></svg></button>
            <button class="w-6 grid place-items-center" aria-label="Network"><svg class="size-4" viewBox="0 0 16 16" fill="none" stroke="#fff"><path d="M5.500 3.500h10v7h-12v-3M9.500 10.500v3M6 13.500h7M.5 2.500h4v4h-4zM2.500 6.500v7" /></svg></button>
            <button class="w-6 grid place-items-center" aria-label="Volume"><svg class="w-[17px] h-4" viewBox="0 0 17 16" fill="none" stroke="#fff"><path d="M1 6h2.500L7 2.500v11L3.500 10H1zM9 6q1.500 2 0 4M11 4q3 4 0 8M13.500 2.500q4 5.500 0 11" /></svg></button>
            <div class="w-[62px] text-center leading-[18px]"><div>2:43 PM</div><div>5/30/2025</div></div>
            <button class="w-[46px] grid place-items-center" aria-label="Notifications"><svg class="size-[17px]" viewBox="0 0 17 17" fill="none" stroke="#fff" stroke-width="1.200"><path d="M1 2h15v11h-5l-2.500 2.500L6 13H1z" /></svg></button>
        </div>
    </footer>
</body>

</html>
